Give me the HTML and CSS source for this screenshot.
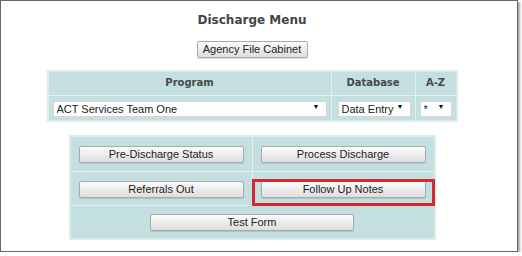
FILE: index.html
```html
<!doctype html>
<html lang="en">
<head>
<meta charset="utf-8">
<title>Discharge Menu</title>
<link rel="stylesheet" href="styles.css">
</head>
<body>

<div class="frame">
  <main class="page">
    <h1 class="title">Discharge Menu</h1>

    <button type="button" class="btn btn-cabinet">Agency File Cabinet</button>

    <table class="grid pick">
      <tr>
        <th class="col-prog">Program</th>
        <th class="col-db">Database</th>
        <th class="col-az">A-Z</th>
      </tr>
      <tr>
        <td><span class="sel sel-prog"><select><option>ACT Services Team One</option></select></span></td>
        <td><span class="sel sel-db"><select><option>Data Entry</option></select></span></td>
        <td><span class="sel sel-az"><select><option>*</option></select></span></td>
      </tr>
    </table>

    <table class="grid menu">
      <tr>
        <td><button type="button" class="btn btn-wide">Pre-Discharge Status</button></td>
        <td><button type="button" class="btn btn-wide">Process Discharge</button></td>
      </tr>
      <tr>
        <td><button type="button" class="btn btn-wide">Referrals Out</button></td>
        <td class="marked">
          <button type="button" class="btn btn-wide">Follow Up Notes</button>
          <span class="mark"></span>
        </td>
      </tr>
      <tr>
        <td colspan="2"><button type="button" class="btn btn-test">Test Form</button></td>
      </tr>
    </table>
  </main>
</div>

</body>
</html>
```

FILE: styles.css
```css
*{box-sizing:border-box;margin:0;padding:0}
body{background:#fff;font-family:"Liberation Sans",Arial,sans-serif;color:#222}

/* screenshot frame with drop shadow */
.frame{
  width:518px;height:252px;border:1px solid #666;background:#fff;
  box-shadow:2px 2px 2px rgba(0,0,0,.35)
}
.page{width:502px;display:flex;flex-direction:column;align-items:center}

.title{
  font:700 12px/1 "DejaVu Sans",Verdana,sans-serif;color:#444;
  margin-top:13px
}

/* grey push buttons */
.btn{
  font:11px/1 "Liberation Sans",Arial,sans-serif;color:#222;
  background:linear-gradient(#fbfbfb,#dedede);
  border:1px solid #a9a9a9;border-radius:2px;
  box-shadow:0 1px 1px rgba(0,0,0,.12);height:17px;cursor:pointer
}
.btn-cabinet{width:111px;margin-top:15px}
.btn-wide{width:165px}
.btn-test{width:204px}

/* teal tables */
.grid{
  border-collapse:collapse;background:#c4dfdf;
  border:2px solid #dcecec
}
.grid td,.grid th{border:1px solid #e3f0f0}

.pick{width:411px;margin-top:12px}
.pick th{
  font:700 10px/1 "DejaVu Sans",Verdana,sans-serif;color:#4a4a4a;height:24px
}
.pick td{height:26px;padding:0 4px}
.col-prog{width:285px}
.col-db{width:83px}

/* selects with small arrow */
.sel{position:relative;display:block}
.sel select{
  appearance:none;-webkit-appearance:none;width:100%;height:16px;
  font:11px/1 "Liberation Sans",Arial,sans-serif;color:#222;
  background:#fff;border:1px solid #d6d6d6;padding:0 3px;border-radius:0
}
.sel::after{
  content:"▼";position:absolute;right:7px;top:4px;font-size:7px;color:#111;
  pointer-events:none
}
.sel-db{width:73px;margin-left:2px}
.sel-az{width:32px}

.menu{width:367px;margin-top:13px}
.menu td{text-align:center;height:34px;width:50%}
.menu tr:first-child td{height:35px}

/* red annotation box */
.marked{position:relative}
.mark{
  position:absolute;left:-1px;top:7px;right:-1px;bottom:-1px;
  border:3px solid #d6282e;pointer-events:none
}
```
